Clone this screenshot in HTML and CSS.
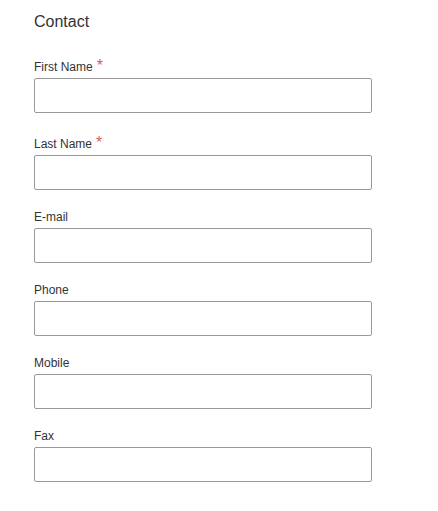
FILE: index.html
```html
<!DOCTYPE html>
<html lang="en">
<head>
<meta charset="utf-8">
<title>Contact</title>
<link rel="stylesheet" href="styles.css">
</head>
<body>
<form class="form">
  <h2 class="title">Contact</h2>
  <div class="field required">
    <label class="label" for="fn">First Name<span class="star">*</span></label>
    <input class="input" id="fn" type="text">
  </div>
  <div class="field required">
    <label class="label" for="ln">Last Name<span class="star">*</span></label>
    <input class="input" id="ln" type="text">
  </div>
  <div class="field">
    <label class="label" for="em">E-mail</label>
    <input class="input" id="em" type="email">
  </div>
  <div class="field">
    <label class="label" for="ph">Phone</label>
    <input class="input" id="ph" type="tel">
  </div>
  <div class="field">
    <label class="label" for="mo">Mobile</label>
    <input class="input" id="mo" type="tel">
  </div>
  <div class="field">
    <label class="label" for="fx">Fax</label>
    <input class="input" id="fx" type="tel">
  </div>
</form>
</body>
</html>
```

FILE: styles.css
```css
html, body {
  margin: 0;
  padding: 0;
  background: #ffffff;
}

body {
  font-family: "Liberation Sans", Arial, sans-serif;
  color: #333333;
}

.form {
  display: flex;
  flex-direction: column;
  padding: 12px 0 0 34px;
  width: 338px;
}

.title {
  margin: 0 0 25px 0;
  font-size: 16px;
  line-height: 20px;
  font-weight: normal;
  color: #333333;
}

.field {
  display: flex;
  flex-direction: column;
  margin-bottom: 21px;
}

.label {
  font-size: 12px;
  line-height: 13px;
  margin-bottom: 4px;
  color: #333333;
}

.required .label {
  padding-top: 4px;
}

.star {
  color: #dc5a5a;
  font-size: 16px;
  line-height: 0;
  margin-left: 4px;
}

.input {
  box-sizing: border-box;
  width: 338px;
  height: 35px;
  margin: 0;
  border: 1px solid #999999;
  border-radius: 2px;
  background: #ffffff;
  padding: 0 8px;
  font-family: inherit;
  font-size: 12px;
  outline: none;
}
```
